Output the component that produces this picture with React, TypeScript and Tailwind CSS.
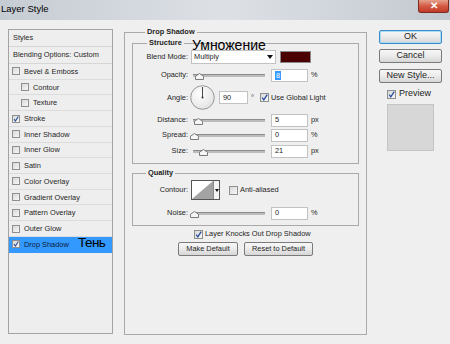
import React from 'react';

const styles = [
  { name: 'Bevel & Emboss', checked: false, indent: false },
  { name: 'Contour', checked: false, indent: true },
  { name: 'Texture', checked: false, indent: true },
  { name: 'Stroke', checked: true, indent: false },
  { name: 'Inner Shadow', checked: false, indent: false },
  { name: 'Inner Glow', checked: false, indent: false },
  { name: 'Satin', checked: false, indent: false },
  { name: 'Color Overlay', checked: false, indent: false },
  { name: 'Gradient Overlay', checked: false, indent: false },
  { name: 'Pattern Overlay', checked: false, indent: false },
  { name: 'Outer Glow', checked: false, indent: false },
  { name: 'Drop Shadow', checked: true, indent: false },
];

function Check({ checked, size = 9 }: { checked?: boolean; size?: number }) {
  return (
    <span
      className={`relative block shrink-0 border border-[#8e8f8f] bg-gradient-to-br from-[#d9d9d9] to-[#f7f7f7] ${size === 8 ? 'h-[8px] w-[8px]' : 'h-[9px] w-[9px]'}`}
    >
      {checked && (
        <svg className="absolute left-0 top-0" width={size - 2} height={size - 2} viewBox="0 0 7 7">
          <path d="M1.2 3.6 L2.8 5.8 L6.2 0.6" stroke="#2a4d9c" strokeWidth="1.3" fill="none" />
        </svg>
      )}
    </span>
  );
}

function Slider({ pos }: { pos: number }) {
  return (
    <div className="relative h-[14px] w-[75px] shrink-0">
      <div className="absolute left-[3px] right-0 top-[6px] h-[3px] border-t border-[#8c8c8c] bg-[#bcbcbc]" />
      <svg className="absolute top-[5px]" style={{ left: pos }} width="9" height="7" viewBox="0 0 9 7">
        <path d="M4.5 0.5 L8.5 3.2 V6.5 H0.5 V3.2 Z" fill="#f5f5f5" stroke="#7b7b7b" />
      </svg>
    </div>
  );
}

function Field({ value, w = 37, selected }: { value: string; w?: number; selected?: boolean }) {
  return (
    <div
      className={`flex h-[13px] shrink-0 items-center border border-[#c2c2c2] bg-white pl-[3px] ${w === 29 ? 'w-[29px]' : 'w-[37px]'}`}
    >
      {selected ? <span className="bg-[#3399ff] px-[1px] leading-[9px] text-white">{value}</span> : <span>{value}</span>}
    </div>
  );
}

function SliderRow({ label, pos, value, unit, cls }: { label: string; pos: number; value: string; unit: string; cls: string }) {
  return (
    <div className={`flex h-[14px] items-center ${cls}`}>
      <span className="w-[55px] text-right">{label}</span>
      <span className="ml-[2px]"><Slider pos={pos} /></span>
      <span className="ml-[6px]"><Field value={value} /></span>
      <span className="ml-[3px]">{unit}</span>
    </div>
  );
}

function Btn({ label, w, primary }: { label: string; w: string; primary?: boolean }) {
  return (
    <div
      className={`flex h-[14px] items-center justify-center rounded-[2px] border bg-gradient-to-b from-[#f7f7f7] via-[#ebebeb] to-[#d6d6d6] ${w} ${primary ? 'border-[#3c8ccc] shadow-[inset_0_0_0_1px_#a8dcf5]' : 'border-[#7a7a7a]'}`}
    >
      {label}
    </div>
  );
}

export default function App() {
  return (
    <div className="relative h-[344px] w-[450px] overflow-hidden bg-[#efefef] font-['Liberation_Sans',Arial,sans-serif] text-[7.4px] text-[#1e1e1e]">
      {/* Title bar */}
      <div className="flex h-[20px] items-start justify-between bg-gradient-to-r from-[#c6ccd3] via-[#dde1e6] to-[#c3c9d0]">
        <span className="mt-[3px] pl-[1px] text-[9.5px] leading-[12px] text-black">Layer Style</span>
        <div className="mr-[1px] flex h-[13px] w-[31px] items-center justify-center rounded-b-[3px] border border-t-0 border-[#7a2a20] bg-gradient-to-b from-[#e4a08c] via-[#d45a44] to-[#c03a28] text-[10px] font-bold leading-none text-white">
          ✕
        </div>
      </div>

      <div className="flex items-start pl-[8px]">
        {/* Styles list */}
        <div className="mt-[9px] h-[305px] w-[105px] shrink-0 border border-[#a3a3a3] bg-[#eeeeee]">
          <div className="flex h-[17px] items-center border-b border-[#d6d6d6] pl-[4px]">Styles</div>
          <div className="flex h-[17px] items-center border-b border-[#d6d6d6] pl-[4px]">Blending Options: Custom</div>
          {styles.map((s, i) => (
            <div
              key={i}
              className={`flex h-[15.73px] items-center gap-[4px] border-b ${i === styles.length - 1 ? 'border-[#3399ff] bg-[#3399ff] text-[#0c1a3c]' : 'border-[#dcdcdc]'} ${s.indent ? 'pl-[12px]' : 'pl-[3px]'}`}
            >
              <Check checked={s.checked} size={8} />
              <span>{s.name}</span>
            </div>
          ))}
        </div>

        {/* Drop Shadow group */}
        <fieldset className="ml-[11px] mt-[7px] flex h-[308px] w-[243px] shrink-0 flex-col border border-[#a9a9a9] px-[7px]">
          <legend className="ml-[13px] px-[2px] font-bold leading-[10px]">Drop Shadow</legend>

          <fieldset className="mt-[1px] flex flex-col border border-[#a9a9a9] pb-[5px]">
            <legend className="ml-[14px] px-[2px] font-bold leading-[10px]">Structure</legend>

            <div className="mt-[2px] flex h-[14px] items-center">
              <span className="w-[55px] text-right">Blend Mode:</span>
              <div className="ml-[3px] flex h-[14px] w-[85px] items-center justify-between border border-[#c2c2c2] bg-white pl-[2px] pr-[2px]">
                <span>Multiply</span>
                <svg width="6" height="4" viewBox="0 0 6 4"><path d="M0 0 H6 L3 4 Z" fill="#111" /></svg>
              </div>
              <div className="ml-[4px] h-[12px] w-[31px] border border-[#8a8a8a] bg-[#4a0000]" />
            </div>

            <div className="mt-[4px] flex h-[14px] items-center">
              <span className="w-[55px] text-right">Opacity:</span>
              <span className="ml-[2px]"><Slider pos={5} /></span>
              <span className="ml-[6px]"><Field value="8" selected /></span>
              <span className="ml-[3px]">%</span>
            </div>

            <div className="mt-[3px] flex h-[25px] items-center">
              <span className="w-[55px] text-right">Angle:</span>
              <svg className="ml-[2px] shrink-0" width="25" height="25" viewBox="0 0 25 25">
                <defs>
                  <radialGradient id="dial" cx="0.4" cy="0.35" r="0.7">
                    <stop offset="0" stopColor="#ffffff" />
                    <stop offset="1" stopColor="#e2e2e2" />
                  </radialGradient>
                </defs>
                <circle cx="12.5" cy="12.5" r="11.8" fill="url(#dial)" stroke="#8d8d8d" strokeWidth="0.9" />
                <line x1="12.5" y1="12.5" x2="12.5" y2="2" stroke="#333" strokeWidth="0.9" />
                <circle cx="12.5" cy="12.5" r="1" fill="#333" />
              </svg>
              <span className="ml-[4px]"><Field value="90" w={29} /></span>
              <span className="ml-[3px]">°</span>
              <span className="ml-[6px]"><Check checked /></span>
              <span className="ml-[2px]">Use Global Light</span>
            </div>

            <SliderRow label="Distance:" pos={4} value="5" unit="px" cls="mt-[3px]" />
            <SliderRow label="Spread:" pos={0} value="0" unit="%" cls="mt-[1px]" />
            <SliderRow label="Size:" pos={9} value="21" unit="px" cls="mt-[2px]" />
          </fieldset>

          <fieldset className="mt-[4px] flex flex-col border border-[#a9a9a9] pb-[5px]">
            <legend className="ml-[13px] px-[2px] font-bold leading-[10px]">Quality</legend>

            <div className="mt-[2px] flex h-[20px] items-center">
              <span className="w-[55px] text-right">Contour:</span>
              <div className="ml-[3px] flex h-[20px] w-[29px] shrink-0 border border-[#555555] bg-white">
                <svg width="21" height="18" viewBox="0 0 21 18" className="shrink-0">
                  <path d="M0 18 L21 0 V18 Z" fill="#a3a3a3" />
                </svg>
                <div className="flex flex-1 items-center justify-center border-l border-[#8a8a8a] bg-[#f4f4f4]">
                  <svg width="4" height="3" viewBox="0 0 4 3"><path d="M0 0 H4 L2 3 Z" fill="#111" /></svg>
                </div>
              </div>
              <span className="ml-[9px]"><Check /></span>
              <span className="ml-[2px]">Anti-aliased</span>
            </div>

            <SliderRow label="Noise:" pos={0} value="0" unit="%" cls="mt-[6px]" />
          </fieldset>

          <div className="ml-[62px] mt-[3px] flex h-[10px] items-center gap-[2px]">
            <Check checked />
            <span>Layer Knocks Out Drop Shadow</span>
          </div>

          <div className="ml-[46px] mt-[3px] flex gap-[6px]">
            <Btn label="Make Default" w="w-[60px]" />
            <Btn label="Reset to Default" w="w-[69px]" />
          </div>
        </fieldset>

        {/* Buttons column */}
        <div className="ml-[12px] mt-[10px] flex w-[63px] shrink-0 flex-col text-[9px]">
          <Btn label="OK" w="w-[63px]" primary />
          <div className="mt-[5px]"><Btn label="Cancel" w="w-[63px]" /></div>
          <div className="mt-[6px]"><Btn label="New Style..." w="w-[63px]" /></div>
          <div className="ml-[8px] mt-[6px] flex h-[10px] items-center gap-[3px]">
            <Check checked />
            <span>Preview</span>
          </div>
          <div className="ml-[8px] mt-[5px] h-[47px] w-[47px] border border-[#c4c4c4] bg-[#d7d7d7]" />
        </div>
      </div>

      {/* Annotations over the screenshot */}
      <div className="absolute left-[192px] top-[38px] text-[14px] leading-[14px] text-black">Умножение</div>
      <div className="absolute left-[78px] top-[236px] text-[13.5px] leading-[14px] tracking-[-0.04em] text-black">Тень</div>
    </div>
  );
}
